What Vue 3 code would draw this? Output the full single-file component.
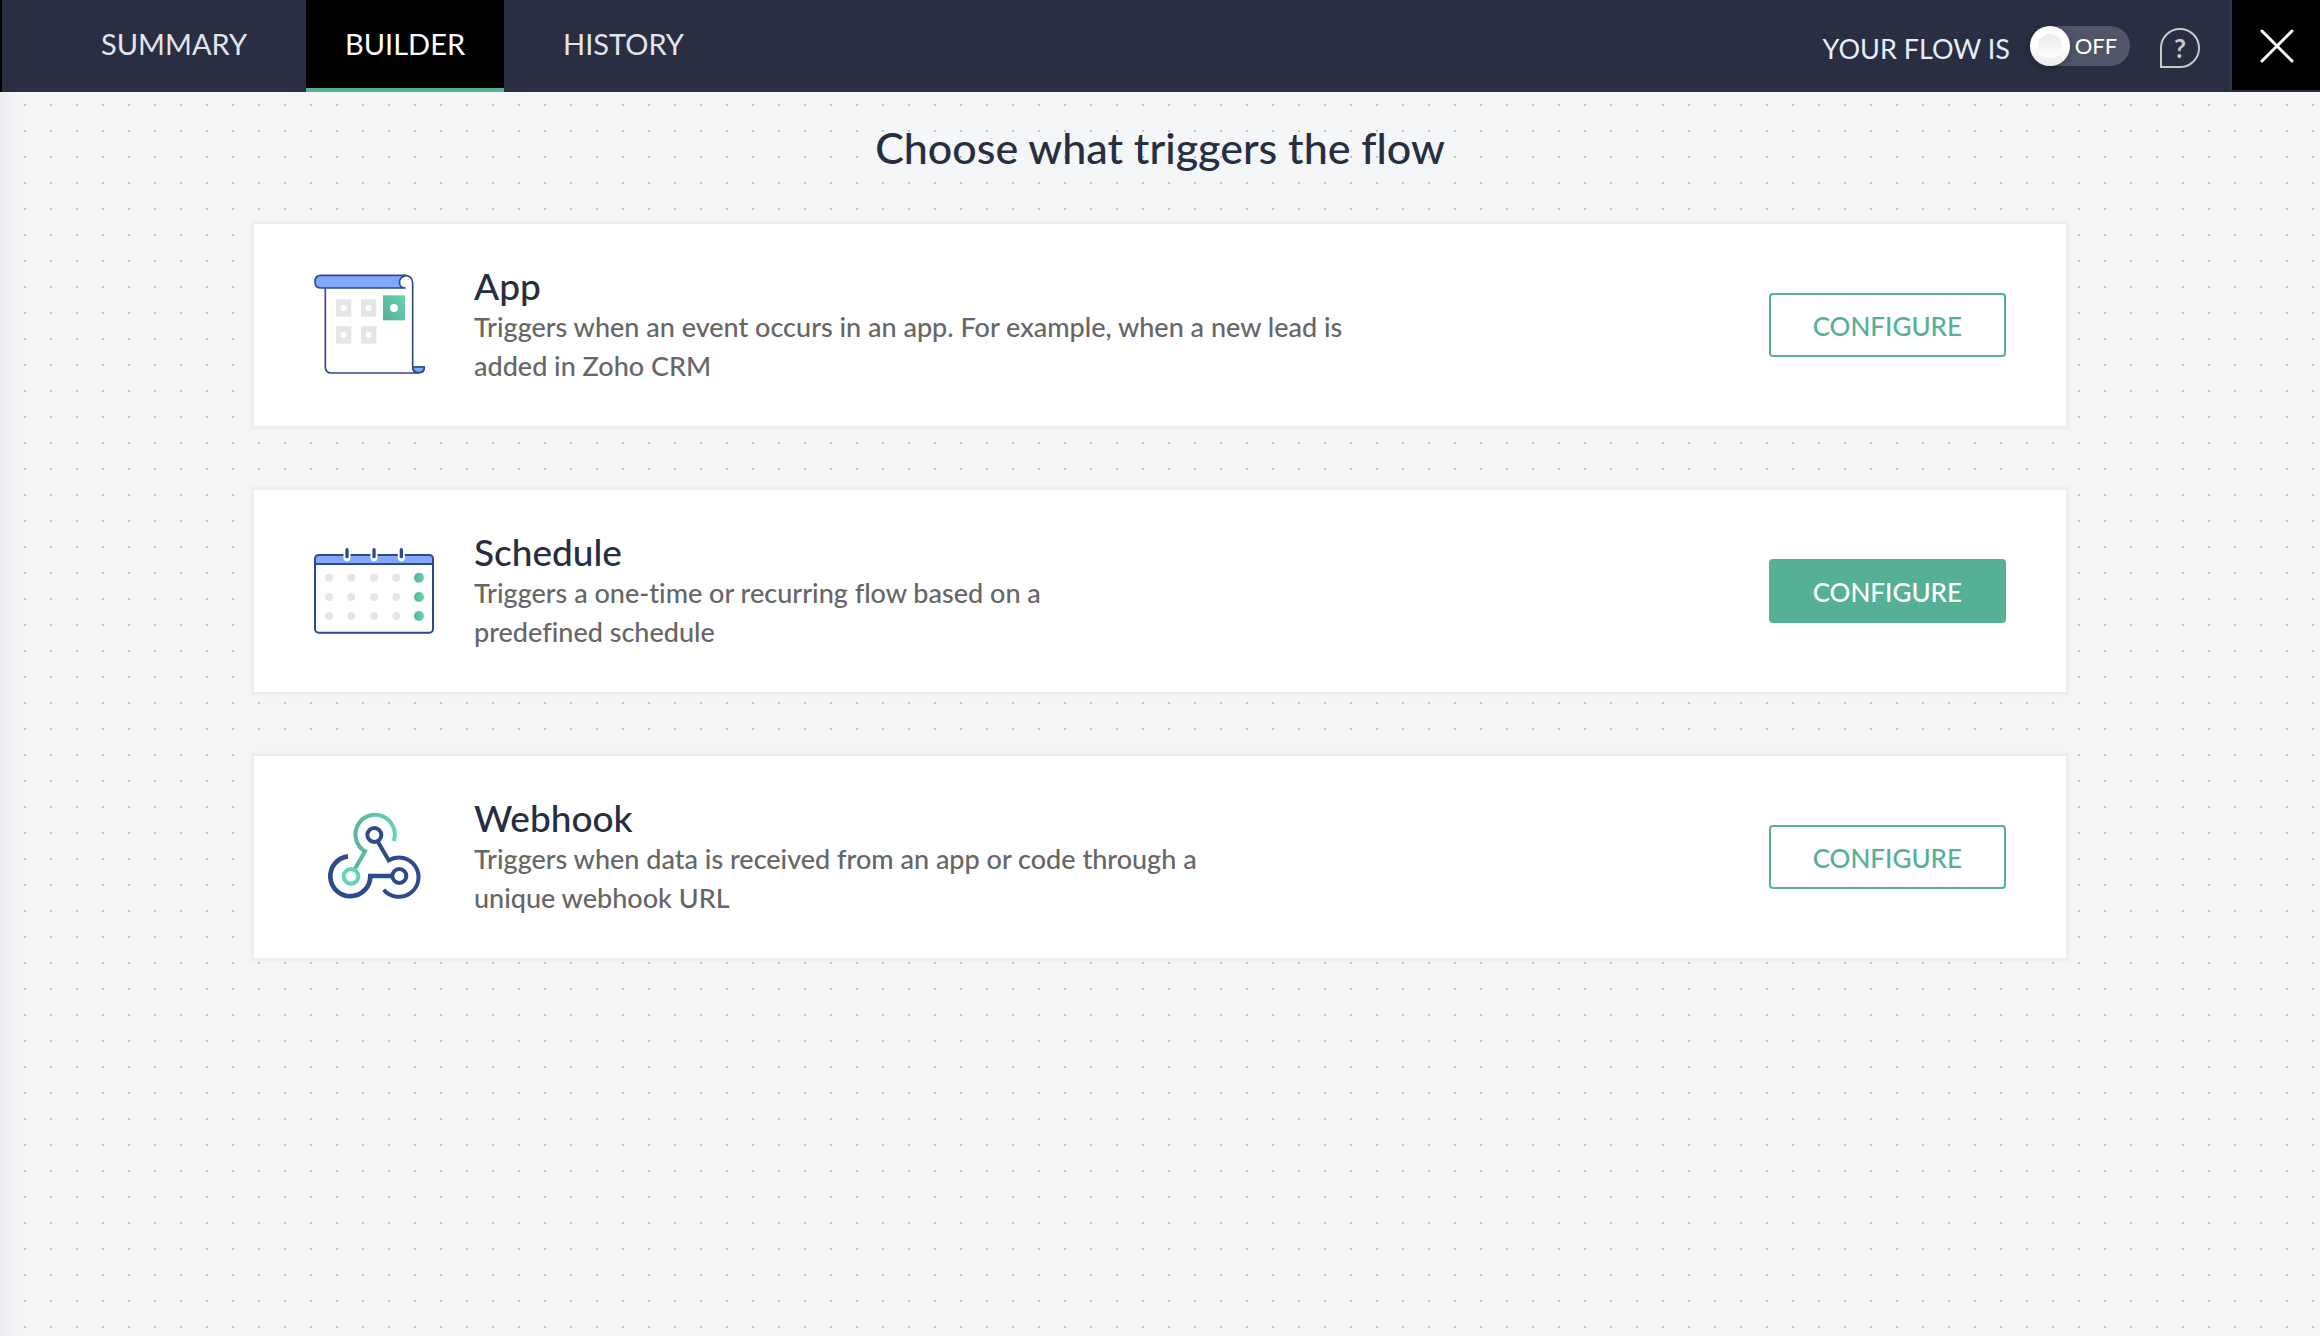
<script setup>
import { ref } from 'vue'

const tabs = ['Summary', 'Builder', 'History']
const activeTab = ref('Builder')
const flowOn = ref(false)
const selected = ref('schedule')

const triggers = [
  {
    id: 'app',
    name: 'App',
    desc: 'Triggers when an event occurs in an app. For example, when a new lead is\nadded in Zoho CRM',
  },
  {
    id: 'schedule',
    name: 'Schedule',
    desc: 'Triggers a one-time or recurring flow based on a\npredefined schedule',
  },
  {
    id: 'webhook',
    name: 'Webhook',
    desc: 'Triggers when data is received from an app or code through a\nunique webhook URL',
  },
]

// calendar grid
const cols = [117, 184, 252, 319]
const rows = [143, 201, 258]
const tiles = [[138, 147], [213, 147], [138, 228], [213, 228]]
</script>

<template>
  <div class="page">
    <header class="topbar">
      <nav class="tabs">
        <button
          v-for="tab in tabs"
          :key="tab"
          type="button"
          class="tab"
          :class="{ active: tab === activeTab }"
          @click="activeTab = tab"
        >{{ tab }}</button>
      </nav>

      <div class="actions">
        <label for="flow-state" class="flow-label">YOUR FLOW IS</label>
        <span class="switch" :class="{ on: flowOn }">
          <input id="flow-state" v-model="flowOn" type="checkbox" class="switch-input" />
          <span class="knob"></span>
          <span class="switch-text">{{ flowOn ? 'ON' : 'OFF' }}</span>
        </span>
        <button type="button" class="help" aria-label="Help">?</button>
        <button type="button" class="close" aria-label="Close">
          <svg viewBox="0 0 34 34" width="34" height="34">
            <path d="M2 2L32 32M32 2L2 32" stroke="#fff" stroke-width="3" stroke-linecap="round" />
          </svg>
        </button>
      </div>
    </header>

    <main class="canvas">
      <h1 class="title">Choose what triggers the flow</h1>

      <div class="cards">
        <section v-for="t in triggers" :key="t.id" class="card">
          <!-- scroll -->
          <svg v-if="t.id === 'app'" class="icon" viewBox="72 74 360 300">
            <defs>
              <linearGradient id="tile" x1="0" y1="1" x2="1" y2="0">
                <stop offset="0" stop-color="#55b096" />
                <stop offset="1" stop-color="#66d3b3" />
              </linearGradient>
            </defs>
            <g stroke="#2c4a8c" stroke-width="5" stroke-linejoin="round">
              <path d="M106 114V350Q106 368 124 368H386" fill="none" />
              <path d="M345 75H93Q75 75 75 94T93 113H345C323 112 323 82 345 77Z" fill="#83a8fb" />
              <path d="M341 75C358 74 368 83 368 98V350Q368 367 386 367Q403 367 403 350H368" fill="none" />
              <path d="M369 350H403Q403 367 386 367T369 350Z" fill="#83a8fb" />
            </g>
            <g v-for="(p, i) in tiles" :key="i">
              <rect :x="p[0]" :y="p[1]" width="46" height="52" fill="#e5e5e5" />
              <circle :cx="p[0] + 23" :cy="p[1] + 26" r="9" fill="#fff" />
            </g>
            <rect x="279" y="135" width="66" height="75" fill="url(#tile)" />
            <circle cx="312" cy="173" r="12" fill="#fff" />
          </svg>

          <!-- calendar -->
          <svg v-else-if="t.id === 'schedule'" class="icon" viewBox="72 33 360 300">
            <defs>
              <linearGradient id="dot" x1="0" y1="0" x2="1" y2="0">
                <stop offset="0" stop-color="#55b49a" />
                <stop offset="1" stop-color="#66d3b3" />
              </linearGradient>
            </defs>
            <path d="M75 103V86Q75 75 86 75H418Q429 75 429 86V103Z" fill="#83a8fb" />
            <rect x="75" y="75" width="354" height="233" rx="11" fill="none" stroke="#2c4a8c" stroke-width="6" />
            <path d="M75 102H429" stroke="#2c4a8c" stroke-width="6" />
            <g v-for="x in [171, 252, 334]" :key="x" stroke-linecap="round">
              <path :d="`M${x} 70V83`" stroke="#fff" stroke-width="21" />
              <path :d="`M${x} 59V80`" stroke="#2c4a8c" stroke-width="10" />
            </g>
            <g v-for="y in rows" :key="y">
              <circle v-for="x in cols" :key="x" :cx="x" :cy="y" r="12" fill="#e5e5e5" />
              <circle cx="387" :cy="y" r="15" fill="url(#dot)" />
            </g>
          </svg>

          <!-- linked rings -->
          <svg v-else class="icon" viewBox="12 51 360 300">
            <defs>
              <linearGradient id="ring" gradientUnits="userSpaceOnUse" x1="128" y1="0" x2="258" y2="0">
                <stop offset="0" stop-color="#58b399" />
                <stop offset="1" stop-color="#66d3b3" />
              </linearGradient>
            </defs>
            <g fill="none" stroke-width="12">
              <path d="M251 153A59 59 0 1 0 165 184L135 236" stroke="url(#ring)" />
              <circle cx="123" cy="259" r="22" stroke="#66d3b3" />
              <g stroke="#2c4a8c">
                <circle cx="193" cy="135" r="21" />
                <circle cx="268" cy="258" r="21" />
                <path d="M204 156L236 211A59 59 0 1 1 221 299" />
                <path d="M247 258H181A60 60 0 1 1 114 199" stroke-width="14" />
              </g>
            </g>
          </svg>

          <div class="info">
            <h2 class="name">{{ t.name }}</h2>
            <p class="desc">{{ t.desc }}</p>
          </div>

          <button
            type="button"
            class="configure"
            :class="{ filled: t.id === selected }"
            @mouseenter="selected = t.id"
          >CONFIGURE</button>
        </section>
      </div>
    </main>
  </div>
</template>

<style>
body {
  margin: 0;
}
</style>

<style scoped>
.page {
  display: flex;
  flex-direction: column;
  min-height: 100vh;
  font-family: Lato, 'Liberation Sans', sans-serif;
  font-weight: 500;
  font-variant-ligatures: none;
  color: #272e42;
}

button {
  font-family: inherit;
  cursor: pointer;
}

.topbar {
  display: flex;
  justify-content: space-between;
  height: 92px;
  box-sizing: border-box;
  padding-left: 60px;
  background: #292e42;
  border-left: 2px solid #000;
}

.tabs {
  display: flex;
  gap: 20px;
}
.tab {
  padding: 0 39px 2px;
  border: 0;
  border-bottom: 4px solid transparent;
  background: none;
  color: #e4e5e8;
  font-size: 29px;
  text-transform: uppercase;
}
.tab.active {
  background: #000;
  border-bottom-color: #55b096;
  color: #fff;
}

.actions {
  display: flex;
  align-items: center;
}
.flow-label {
  margin-right: 20px;
  padding-top: 4px;
  color: #e6eefa;
  font-size: 27px;
  font-weight: 400;
}

.switch {
  position: relative;
  display: flex;
  align-items: center;
  width: 100px;
  height: 40px;
  border-radius: 20px;
  background: #505568;
}
.switch.on {
  flex-direction: row-reverse;
  background: #55b096;
}
.switch-input {
  position: absolute;
  inset: 0;
  width: 100%;
  height: 100%;
  margin: 0;
  opacity: 0;
  cursor: pointer;
}
.knob {
  display: grid;
  place-items: center;
  width: 40px;
  height: 40px;
  border-radius: 50%;
  background: linear-gradient(#fff 50%, #ececec);
  box-shadow: 0 2px 8px rgba(0, 0, 0, 0.25);
}
.knob::after {
  content: '';
  width: 24px;
  height: 24px;
  border-radius: 50%;
  background: linear-gradient(#ebebeb, #fff);
}
.switch-text {
  flex: 1;
  padding: 0 8px 2px 0;
  text-align: center;
  color: #fff;
  font-size: 22px;
  font-weight: 400;
}

.help {
  width: 40px;
  height: 40px;
  margin: 4px 30px 0;
  padding: 0;
  border: 2px solid #c9c9cb;
  border-radius: 50% 50% 50% 0;
  background: none;
  color: #c9c9cb;
  font-size: 26px;
  font-weight: 700;
  line-height: 36px;
}
.close {
  display: grid;
  place-items: center;
  align-self: stretch;
  width: 90px;
  padding: 2px 0 0 2px;
  border: 0;
  border-left: 2px solid #2e3752;
  border-bottom: 2px solid #292e42;
  background: #000;
}

.canvas {
  flex: 1;
  padding: 24px 254px 64px;
  background:
    linear-gradient(90deg, #ecedf0, rgba(244, 246, 248, 0) 20px),
    conic-gradient(from 270deg at 2px 2px, #c0c1c3 90deg, transparent 0) 24px 12px / 26px 26px,
    #f4f6f8;
}
.title {
  margin: 0 0 44px;
  font-size: 43px;
  font-weight: 500;
  line-height: 64px;
  text-align: center;
}

.cards {
  display: flex;
  flex-direction: column;
  gap: 64px;
}
.card {
  display: flex;
  align-items: center;
  gap: 40px;
  min-height: 202px;
  box-sizing: border-box;
  padding: 32px 60px;
  background: #fff;
  box-shadow: 0 0 2px 3px #ededee;
}
.icon {
  flex: none;
  width: 120px;
  height: 100px;
  overflow: visible;
}
.info {
  flex: 1;
  padding-bottom: 2px;
}
.name {
  margin: 0;
  font-size: 37px;
  font-weight: 500;
  line-height: 43px;
}
.desc {
  margin: 0;
  color: #666;
  font-size: 27px;
  line-height: 39px;
  white-space: pre-line;
}
.configure {
  height: 64px;
  padding: 2px 42px 0;
  border: 2px solid #55b096;
  border-radius: 4px;
  background: #fff;
  color: #55b096;
  font-size: 26px;
  font-weight: 500;
}
.configure.filled {
  background: #55b096;
  color: #fff;
}
</style>
